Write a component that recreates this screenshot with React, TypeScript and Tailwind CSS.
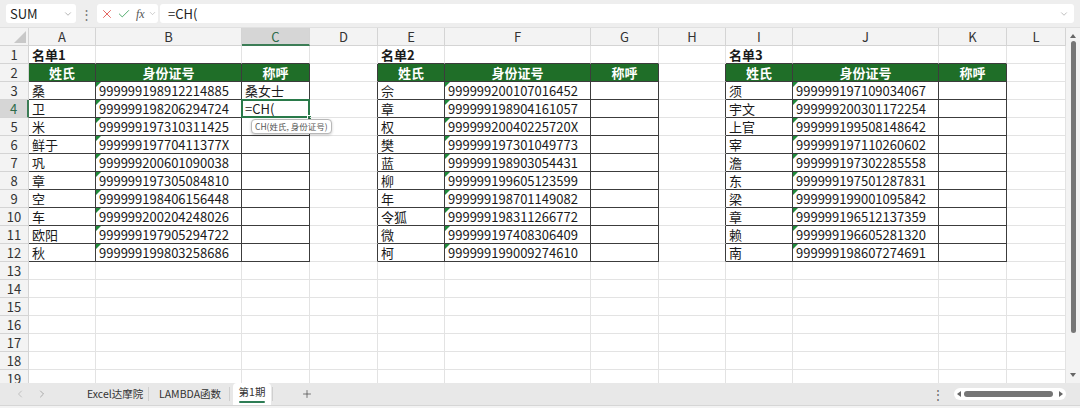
import { X, Check, ChevronDown, Plus, ChevronLeft, ChevronRight } from 'lucide-react';

const FONT = { fontFamily: '"Noto Sans CJK SC", "Noto Sans", sans-serif' };

const COLS = ['A', 'B', 'C', 'D', 'E', 'F', 'G', 'H', 'I', 'J', 'K', 'L'];
const WIDTHS = [67, 146, 68, 68, 67, 146, 68, 67, 67, 146, 68, 59];

const lists: [string, string][][] = [
  [
    ['桑', '999999198912214885'],
    ['卫', '999999198206294724'],
    ['米', '999999197310311425'],
    ['鲜于', '99999919770411377X'],
    ['巩', '999999200601090038'],
    ['章', '999999197305084810'],
    ['空', '999999198406156448'],
    ['车', '999999200204248026'],
    ['欧阳', '999999197905294722'],
    ['秋', '999999199803258686'],
  ],
  [
    ['佘', '999999200107016452'],
    ['章', '999999198904161057'],
    ['权', '99999920040225720X'],
    ['樊', '999999197301049773'],
    ['蓝', '999999198903054431'],
    ['柳', '999999199605123599'],
    ['年', '999999198701149082'],
    ['令狐', '999999198311266772'],
    ['微', '999999197408306409'],
    ['柯', '999999199009274610'],
  ],
  [
    ['须', '999999197109034067'],
    ['宇文', '999999200301172254'],
    ['上官', '999999199508148642'],
    ['宰', '999999197110260602'],
    ['澹', '999999197302285558'],
    ['东', '999999197501287831'],
    ['梁', '999999199001095842'],
    ['章', '999999196512137359'],
    ['赖', '999999196605281320'],
    ['南', '999999198607274691'],
  ],
];

// tables sit in columns A-C, E-G, I-K
const tableStart = (c: number) => (c % 4 < 3 ? Math.floor(c / 4) : -1);

function inTable(r: number, c: number) {
  return r >= 2 && r <= 12 && c >= 0 && c < 11 && c % 4 < 3;
}

function cellContent(r: number, c: number) {
  const t = tableStart(c);
  const k = c % 4;
  if (r === 1 && k === 0 && t >= 0) return { text: `名单${t + 1}`, kind: 'title' };
  if (t < 0 || r < 2 || r > 12) return { text: '', kind: 'empty' };
  if (r === 2) return { text: ['姓氏', '身份证号', '称呼'][k], kind: 'head' };
  const row = lists[t][r - 3];
  if (k === 0) return { text: row[0], kind: 'text' };
  if (k === 1) return { text: row[1], kind: 'id' };
  if (t === 0 && r === 3) return { text: '桑女士', kind: 'text' };
  if (t === 0 && r === 4) return { text: '=CH(', kind: 'active' };
  return { text: '', kind: 'text' };
}

function Cell({ r, c }: { r: number; c: number }) {
  const { text, kind } = cellContent(r, c);
  const rightDark = inTable(r, c) || inTable(r, c + 1);
  const bottomDark = inTable(r, c) || inTable(r + 1, c);
  return (
    <div
      className={`relative h-[18px] border-r border-b text-[13px] leading-[17px] text-[#1a1a1a] whitespace-nowrap ${
        rightDark ? 'border-r-[#3c3c3c]' : 'border-r-[#e3e3e3]'
      } ${bottomDark ? 'border-b-[#3c3c3c]' : 'border-b-[#e3e3e3]'} ${
        kind === 'head' ? 'bg-[#1f6e28] text-center font-semibold text-white' : 'pl-[3px]'
      } ${kind === 'title' ? 'font-bold' : ''}`}
    >
      {kind === 'head' ? <span className="text-white">{text}</span> : text}
      {kind === 'id' && (
        <span className="absolute left-0 top-0 h-0 w-0 border-t-[5px] border-r-[5px] border-t-[#1f8a3a] border-r-transparent" />
      )}
      {kind === 'active' && (
        <>
          <span className="absolute -left-px -top-px h-[19px] w-[69px] border-2 border-[#2a7a4a]" />
          <span className="absolute -right-[3px] -bottom-[3px] h-[5px] w-[5px] bg-[#2a7a4a] border border-white" />
          <span className="absolute left-[9px] top-[19px] z-10 rounded-[4px] border border-[#b8b8b8] bg-white px-[3px] text-[8.5px] leading-[13px] text-[#555] shadow-[0_1px_3px_rgba(0,0,0,0.2)]">
            CH(姓氏, 身份证号)
          </span>
        </>
      )}
    </div>
  );
}

function FormulaBar() {
  return (
    <div className="flex h-[28px] items-center bg-[#eeeeee] px-[6px] border-b border-[#e0e0e0]">
      <div className="flex h-[19px] w-[70px] shrink-0 items-center justify-between rounded-[3px] bg-white pl-[4px] pr-[3px] text-[13px] text-[#222]">
        <span>SUM</span>
        <ChevronDown size={10} strokeWidth={1.5} className="text-[#888]" />
      </div>
      <span className="mx-[4px] text-[13px] leading-none text-[#777]">⋮</span>
      <div className="flex h-[19px] w-[61px] shrink-0 items-center gap-[3px] rounded-[3px] bg-white pl-[3px]">
        <X size={14} strokeWidth={1.5} className="shrink-0 text-[#e0504a]" />
        <Check size={14} strokeWidth={1.5} className="shrink-0 text-[#3aa15a]" />
        <span className="ml-[2px] text-[12px] italic text-[#555]" style={{ fontFamily: '"Liberation Serif", serif' }}>
          fx
        </span>
        <ChevronDown size={9} strokeWidth={1.5} className="shrink-0 text-[#aaa]" />
      </div>
      <div className="ml-[2px] flex h-[19px] flex-1 items-center justify-between rounded-[3px] bg-white pl-[8px] pr-[5px] text-[13px] text-[#222]">
        <span>=CH(</span>
        <ChevronDown size={10} strokeWidth={1.5} className="text-[#999]" />
      </div>
    </div>
  );
}

function TabBar() {
  return (
    <div className="flex h-[25px] flex-col">
      <div className="flex h-[22px] items-center whitespace-nowrap bg-[#e8e8e8] text-[10.5px] text-[#333]">
        <ChevronLeft size={12} strokeWidth={1.3} className="ml-[14px] shrink-0 text-[#aaa]" />
        <ChevronRight size={12} strokeWidth={1.3} className="ml-[10px] shrink-0 text-[#888]" />
        <span className="ml-[39px] w-[58px] shrink-0">Excel达摩院</span>
        <span className="ml-[3px] h-[14px] w-px shrink-0 bg-[#cfcfcf]" />
        <span className="ml-[10px] w-[64px] shrink-0">LAMBDA函数</span>
        <span className="ml-[6px] h-[14px] w-px shrink-0 bg-[#cfcfcf]" />
        <div className="ml-[3px] flex h-[22px] w-[38px] shrink-0 flex-col items-center justify-center rounded-t-[4px] bg-white">
          <span className="leading-[14px]">第1期</span>
          <span className="mt-[2px] h-[2px] w-[26px] rounded bg-[#2e7d55]" />
        </div>
        <span className="ml-[1px] h-[14px] w-px shrink-0 bg-[#cfcfcf]" />
        <Plus size={12} strokeWidth={1.4} className="ml-[28px] shrink-0 text-[#444]" />
        <div className="flex-1" />
        <span className="text-[12px] leading-none text-[#666]">⋮</span>
        <div className="ml-[10px] mr-[14px] flex h-[12px] w-[112px] shrink-0 items-center rounded-full bg-white px-[3px]">
          <span className="h-0 w-0 border-y-[3px] border-r-[4px] border-y-transparent border-r-[#666]" />
          <span className="ml-[3px] h-[6px] flex-1 rounded-full bg-[#757575]" />
          <span className="ml-[6px] h-0 w-0 border-y-[3px] border-l-[4px] border-y-transparent border-l-[#666]" />
        </div>
      </div>
      <div className="h-[3px] border-t border-[#d6d6d6] bg-[#f3f3f3]" />
    </div>
  );
}

export default function App() {
  const rows = Array.from({ length: 19 }, (_, i) => i + 1);
  const template = `29px ${WIDTHS.map((w) => `${w}px`).join(' ')}`;
  return (
    <div className="flex h-[408px] w-[1080px] flex-col overflow-hidden bg-white" style={FONT}>
      <FormulaBar />
      <div className="flex h-[355px] overflow-hidden">
        <div className="h-full w-[1066px] overflow-hidden">
          <div className="grid" style={{ gridTemplateColumns: template }}>
            {/* column headers */}
            <div className="relative h-[18px] border-r border-b border-[#d4d4d4] bg-[#f3f3f3]">
              <svg className="absolute bottom-[2px] right-[2px]" width="12" height="12" viewBox="0 0 12 12">
                <polygon points="12,0 12,12 0,12" fill="#c8c8c8" />
              </svg>
            </div>
            {COLS.map((col, i) => (
              <div
                key={col}
                className={`h-[18px] text-center text-[13px] leading-[17px] ${
                  i === 2
                    ? 'border-r border-r-[#d4d4d4] border-b-2 border-b-[#3c7d56] bg-[#d6d6d6] text-[#2e6b4a]'
                    : 'border-r border-b border-[#d4d4d4] bg-[#f3f3f3] text-[#333]'
                }`}
              >
                {col}
              </div>
            ))}
            {rows.map((r) => (
              <div key={r} className="contents">
                <div
                  className={`h-[18px] text-center text-[13px] leading-[17px] ${
                    r === 4
                      ? 'border-r-2 border-b border-r-[#3c7d56] border-b-[#d4d4d4] bg-[#d6d6d6] text-[#2e6b4a]'
                      : 'border-r border-b border-[#d4d4d4] bg-[#f3f3f3] text-[#333]'
                  }`}
                >
                  {r}
                </div>
                {COLS.map((_, c) => (
                  <Cell key={c} r={r} c={c} />
                ))}
              </div>
            ))}
          </div>
        </div>
        {/* vertical scrollbar */}
        <div className="flex w-[14px] flex-col items-center bg-[#f3f3f3] py-[3px]">
          <span className="mt-[3px] h-0 w-0 border-x-[3px] border-b-[4px] border-x-transparent border-b-[#666]" />
          <span className="mt-[3px] h-[292px] w-[5px] rounded-full bg-[#777]" />
          <div className="flex-1" />
          <span className="mb-[3px] h-0 w-0 border-x-[3px] border-t-[4px] border-x-transparent border-t-[#666]" />
        </div>
      </div>
      <TabBar />
    </div>
  );
}
